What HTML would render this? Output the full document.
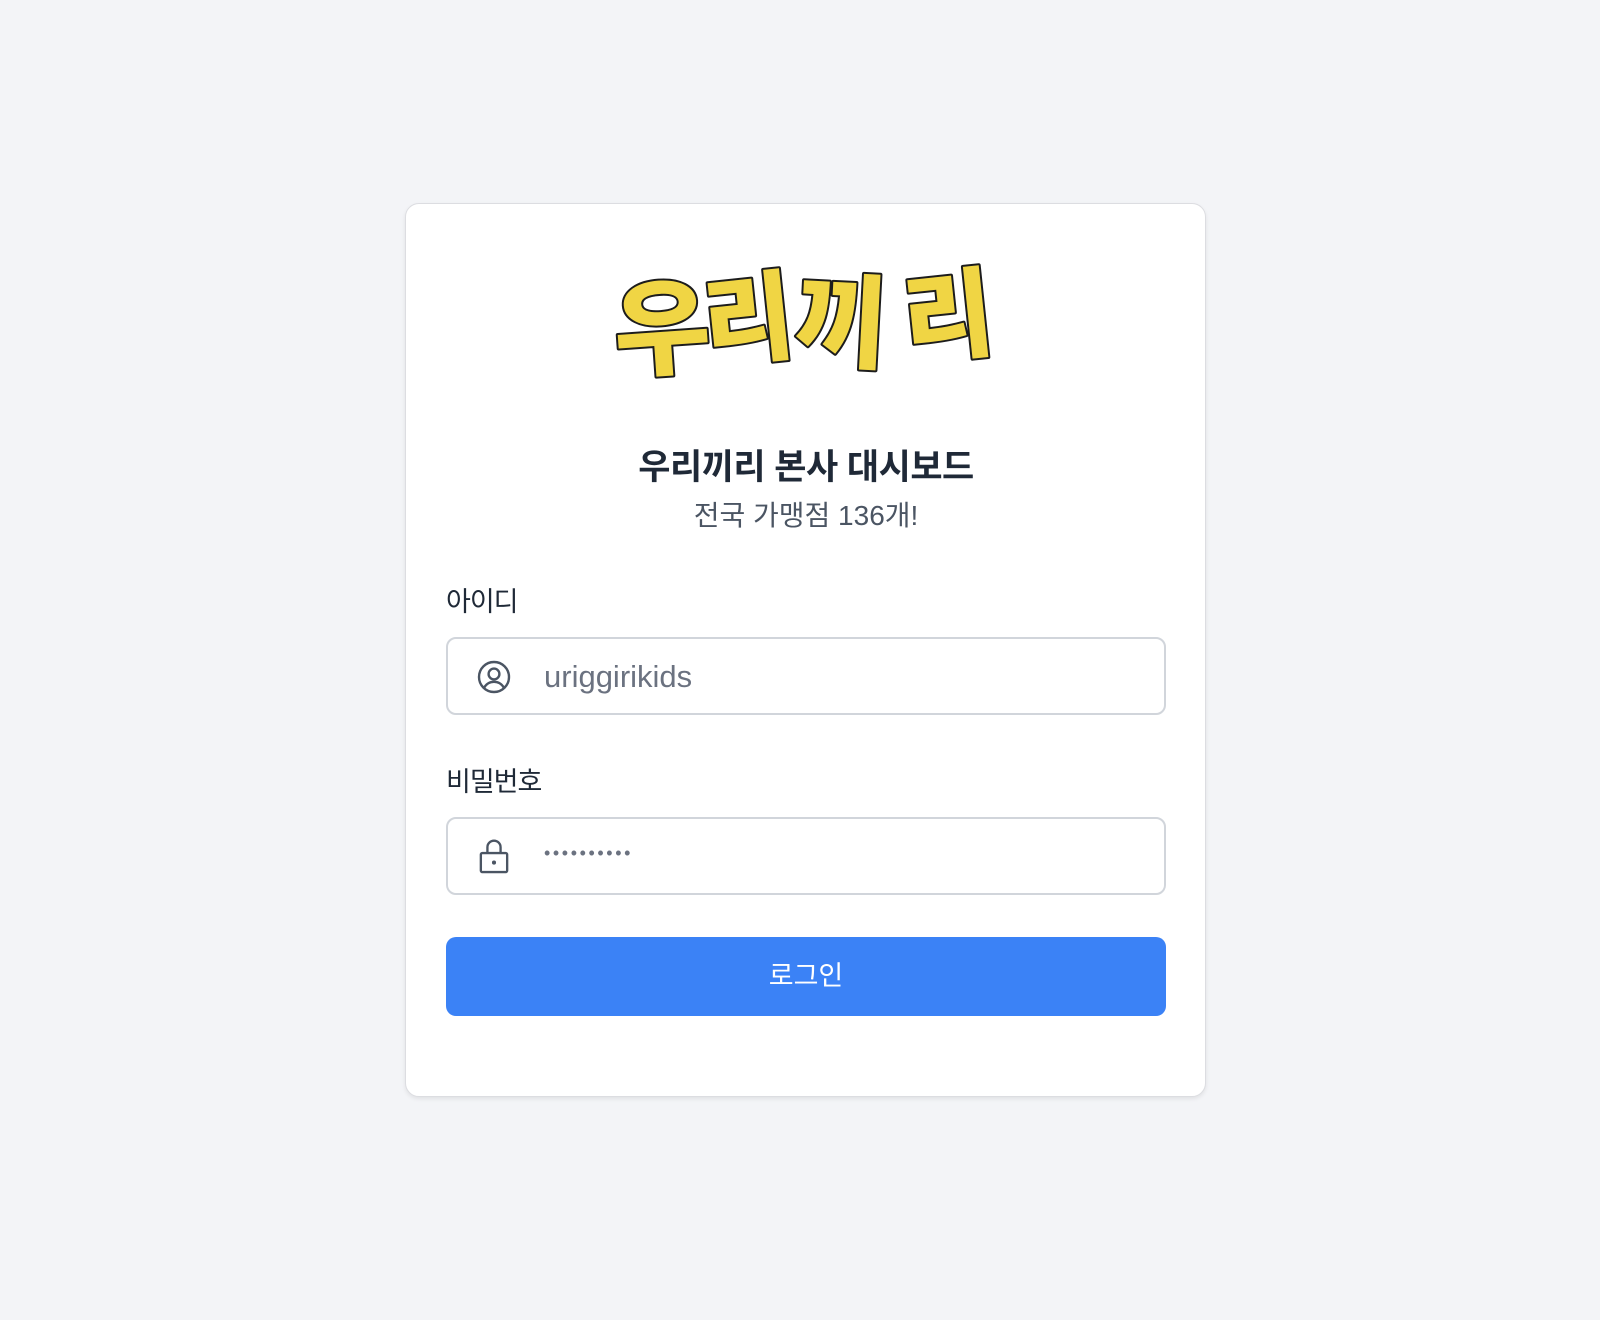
<!DOCTYPE html>
<html><head><meta charset="utf-8"><style>
html,body{margin:0;padding:0}
body{width:1600px;height:1320px;background:#f3f4f7;font-family:"Liberation Sans","Noto Sans CJK KR",sans-serif;position:relative;overflow:hidden}
.card{position:absolute;left:405px;top:203px;width:801px;height:894px;box-sizing:border-box;background:#fff;border:1px solid #dcdde1;border-radius:14px;box-shadow:0 2px 4px rgba(0,0,0,.08)}
.abs{position:absolute}
.title{left:0;width:800px;text-align:center;font-size:35px;font-weight:700;color:#1f2937;letter-spacing:-0.5px}
.sub{left:0;width:800px;top:290px;text-align:center;font-size:28px;color:#4b5563}
.label{left:40px;font-size:27px;color:#1f2937;letter-spacing:-1px}
.inp{left:40px;width:720px;height:78px;box-sizing:border-box;border:2px solid #d1d5db;border-radius:10px}
.btn{left:40px;width:720px;height:79px;top:733px;background:#3b82f6;border-radius:10px;color:#fff;font-size:27px;text-align:center;line-height:79px}
</style></head><body>
<div class="card">
  <svg class="abs" style="left:198px;top:50px" width="420" height="140" viewBox="0 0 420 140">
    <g font-family="'Noto Sans CJK KR',sans-serif" font-weight="900" fill="#f0d544" stroke="#1c1c1c" stroke-width="4" paint-order="stroke" stroke-linejoin="round">
      <text x="10" y="112" font-size="105" transform="rotate(-4 60 80)">우</text>
      <text x="100" y="100" font-size="98" transform="rotate(-6 150 70)">리</text>
      <text x="190" y="105" font-size="102" transform="rotate(3 240 70)">끼</text>
      <text x="300" y="98" font-size="98" transform="rotate(-6 340 70)">리</text>
    </g>
  </svg>
  <div class="abs title" style="top:235px">우리끼리 본사 대시보드</div>
  <div class="abs sub">전국 가맹점 136개!</div>
  <div class="abs label" style="top:376px">아이디</div>
  <div class="abs inp" style="top:433px">
    <svg class="abs" style="left:28px;top:20px" width="36" height="36" viewBox="0 0 24 24" fill="none" stroke="#4b5563" stroke-width="1.6"><circle cx="12" cy="12" r="10"/><circle cx="12" cy="10" r="3.6"/><path d="M5.5 19c1.5-2.6 3.8-3.8 6.5-3.8s5 1.2 6.5 3.8"/></svg>
    <div class="abs" style="left:96px;top:20px;font-size:31px;color:#6b7280">uriggirikids</div>
  </div>
  <div class="abs label" style="top:556px">비밀번호</div>
  <div class="abs inp" style="top:613px">
    <svg class="abs" style="left:28px;top:18px" width="36" height="38" viewBox="0 0 24 26" fill="none" stroke="#4b5563" stroke-width="1.6"><rect x="3" y="11" width="18" height="13" rx="1"/><path d="M7.5 11V7a4.5 4.5 0 0 1 9 0v4"/><circle cx="12" cy="17.5" r=".6" fill="#4b5563"/></svg>
    <div class="abs" style="left:96px;top:24px;font-size:18px;color:#6b7280;letter-spacing:2.6px">••••••••••</div>
  </div>
  <div class="abs btn">로그인</div>
</div>
</body></html>
